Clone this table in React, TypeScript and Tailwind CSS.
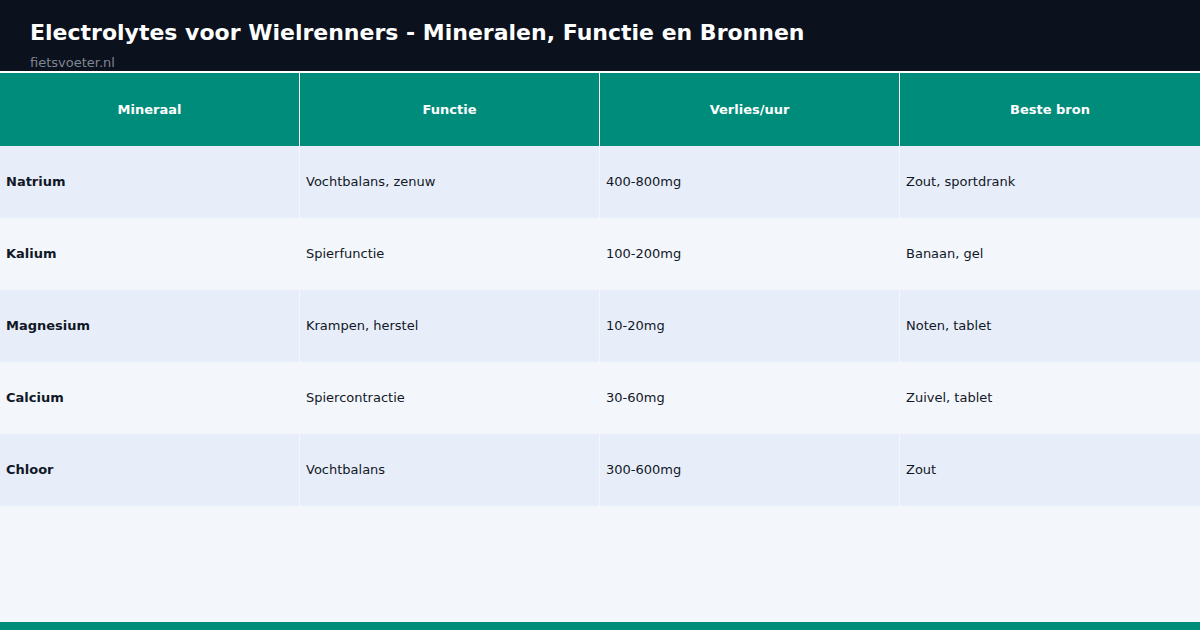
import React from "react";

const rows = [
  ["Natrium", "Vochtbalans, zenuw", "400-800mg", "Zout, sportdrank"],
  ["Kalium", "Spierfunctie", "100-200mg", "Banaan, gel"],
  ["Magnesium", "Krampen, herstel", "10-20mg", "Noten, tablet"],
  ["Calcium", "Spiercontractie", "30-60mg", "Zuivel, tablet"],
  ["Chloor", "Vochtbalans", "300-600mg", "Zout"],
];

const heads = ["Mineraal", "Functie", "Verlies/uur", "Beste bron"];

export default function App() {
  return (
    <div
      className="w-[1200px] h-[630px] flex flex-col bg-[#f3f6fb] overflow-hidden"
      style={{ fontFamily: '"DejaVu Sans", "Liberation Sans", sans-serif' }}
    >
      <div className="h-[71px] bg-[#0b111d] px-[30px] pt-[19px] shrink-0 overflow-hidden">
        <div className="text-white font-bold text-[22px] leading-[28px]">
          Electrolytes voor Wielrenners - Mineralen, Functie en Bronnen
        </div>
        <div className="text-[#7f8693] text-[13px] leading-[16px] mt-[8px]">fietsvoeter.nl</div>
      </div>
      <div className="h-[2px] bg-white shrink-0" />
      <div className="grid grid-cols-4 h-[73px] bg-[#008c7a] shrink-0">
        {heads.map((h, i) => (
          <div
            key={h}
            className={`flex items-center justify-center text-white font-bold text-[13px] ${i < 3 ? "border-r border-white" : ""}`}
          >
            {h}
          </div>
        ))}
      </div>
      {rows.map((r, ri) => (
        <div
          key={r[0]}
          className={`grid grid-cols-4 h-[72px] shrink-0 ${ri % 2 === 0 ? "bg-[#e8eef9]" : "bg-[#f3f6fb]"}`}
        >
          {r.map((c, ci) => (
            <div
              key={ci}
              className={`flex items-center pl-[6px] text-[13px] text-[#111827] ${ci < 3 ? "border-r border-[#f3f6fb]" : ""} ${ci === 0 ? "font-bold" : ""}`}
            >
              {c}
            </div>
          ))}
        </div>
      ))}
      <div className="flex-1" />
      <div className="h-[8px] bg-[#008c7a] shrink-0" />
    </div>
  );
}
